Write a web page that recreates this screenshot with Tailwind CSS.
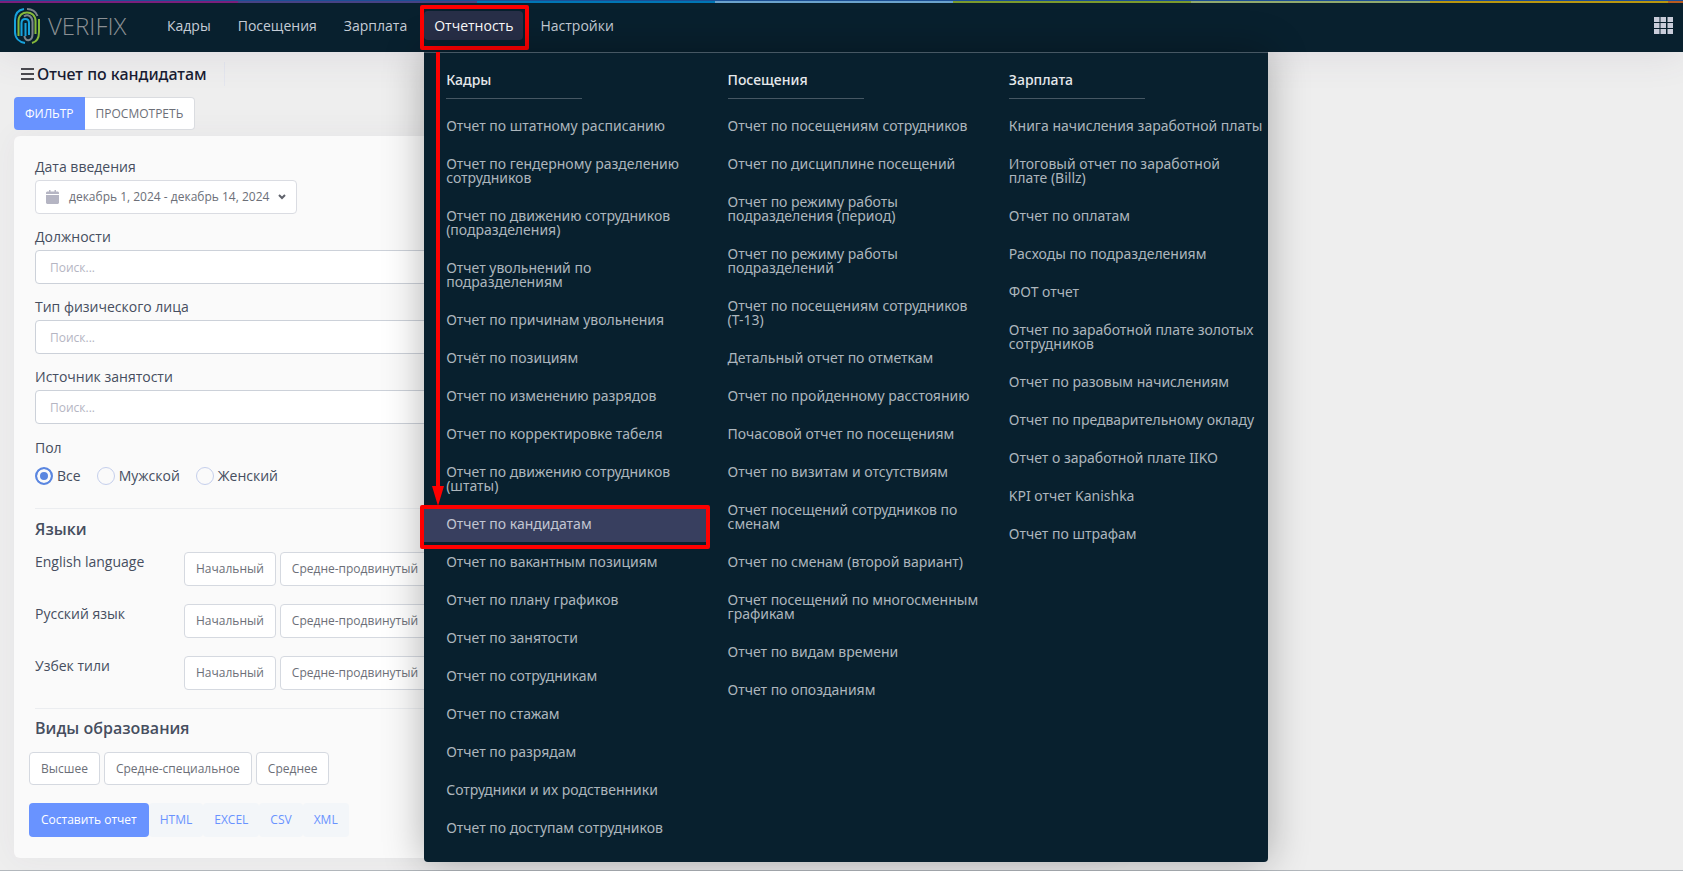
<!DOCTYPE html>
<html lang="ru">
  <head>
    <meta charset="UTF-8" />
    <meta name="viewport" content="width=device-width, initial-scale=1.0" />
    <title>Отчет по кандидатам</title>
    <script src="https://cdn.jsdelivr.net/npm/@tailwindcss/browser@4"></script>
  </head>
  <body class="min-h-screen flex flex-col bg-[#eeeeee] font-['Open_Sans','Noto_Sans',sans-serif] text-sm text-[#464e5f] overflow-x-hidden">
    <!-- Header -->
    <header class="relative z-10 h-[52px] flex flex-col bg-[#08202e] shadow-[0_0_40px_0_rgba(82,63,105,0.12)]">
      <div class="h-px bg-[#1c4f94]"></div>
      <div class="flex h-0.5">
        <span class="flex-1 bg-[#7a1f7c]"></span>
        <span class="flex-1 bg-[#464285]"></span>
        <span class="flex-1 bg-[#0076b5]"></span>
        <span class="flex-1 bg-[#6aa2cc]"></span>
        <span class="flex-1 bg-[#7a9a2d]"></span>
        <span class="flex-1 bg-[#8fa96f]"></span>
        <span class="flex-1 bg-[#b8960f]"></span>
        <span class="w-[15px] bg-[#b85c20]"></span>
      </div>

      <div class="flex flex-1 items-center pl-3.5 pr-2.5 pb-1">
        <a href="#" class="flex items-center w-[143px] gap-2">
          <svg class="w-[26px] h-9 shrink-0" viewBox="0 0 26 36" fill="none" stroke-width="2">
            <path d="M10 1C4 2 1 6 1 12v12c0 6 4 10 10 11" stroke="#17a2dc" />
            <path d="M13 1c5 0 9 3 10.500 7" stroke="#7e858b" />
            <path d="M4.500 28V13C4.500 1.500 21.500 1.500 21.500 13v13" stroke="#86b93b" />
            <path d="M25 11v13c0 6-3 10-7 11" stroke="#86b93b" />
            <path d="M10 8.500c4-3 8.500 0 8.500 5.500v12c0 8-8 8-8 2" stroke="#7e858b" />
            <path d="M7.500 28V15c0-5.500 7.500-5.500 7.500 0v12" stroke="#17a2dc" />
            <path d="M11.500 15v13" stroke="#17a2dc" />
          </svg>
          <span class="font-light text-2xl leading-8 text-[#8b9094]">VERIFIX</span>
        </a>
        <nav class="text-[#c5ccd6]">
          <ul class="flex items-center gap-[7px]">
            <li><a href="#" class="block px-2.5 leading-[29px]">Кадры</a></li>
            <li><a href="#" class="block px-2.5 leading-[29px]">Посещения</a></li>
            <li><a href="#" class="block px-2.5 leading-[29px]">Зарплата</a></li>
            <li class="relative">
              <a href="#" class="block px-2.5 leading-[29px] rounded bg-[#282f48] text-white">Отчетность</a>
              <span class="absolute -left-1 -right-1.5 -top-1.5 -bottom-2.5 border-4 border-[#fe0000] rounded-xs"></span>

              <!-- Reports menu -->
              <div class="absolute left-0 top-[41px] w-[844px] grid grid-cols-3 pt-4 pb-4 border-t border-[#465763] rounded-b bg-[#08202e] font-['Noto_Sans','Open_Sans',sans-serif] text-[#adb6bd] shadow-[0_0_40px_0_rgba(0,0,0,0.3)]">
                <section>
                  <h3 class="ml-[22px] mb-[9px] w-[136px] pb-2 border-b border-[#465763] font-medium leading-[21px] text-[#e6e9eb]">Кадры</h3>
                  <ul class="flex flex-col gap-0.5 leading-[14px]">
                    <li><a href="#" class="block py-[11px] pl-[22px] pr-2">Отчет по штатному расписанию</a></li>
                    <li><a href="#" class="block py-[11px] pl-[22px] pr-2">Отчет по гендерному разделению сотрудников</a></li>
                    <li><a href="#" class="block py-[11px] pl-[22px] pr-2">Отчет по движению сотрудников (подразделения)</a></li>
                    <li><a href="#" class="block py-[11px] pl-[22px] pr-2">Отчет увольнений по подразделениям</a></li>
                    <li><a href="#" class="block py-[11px] pl-[22px] pr-2">Отчет по причинам увольнения</a></li>
                    <li><a href="#" class="block py-[11px] pl-[22px] pr-2">Отчёт по позициям</a></li>
                    <li><a href="#" class="block py-[11px] pl-[22px] pr-2">Отчет по изменению разрядов</a></li>
                    <li><a href="#" class="block py-[11px] pl-[22px] pr-2">Отчет по корректировке табеля</a></li>
                    <li><a href="#" class="block py-[11px] pl-[22px] pr-2">Отчет по движению сотрудников (штаты)</a></li>
                    <li class="relative">
                      <a href="#" class="block py-[11px] pl-[22px] pr-2 bg-[#383f5f] text-[#c2c6d2]">Отчет по кандидатам</a>
                      <span class="absolute -inset-x-1 -top-px -bottom-[7px] border-4 border-[#fe0000] rounded-xs"></span>
                    </li>
                    <li><a href="#" class="block py-[11px] pl-[22px] pr-2">Отчет по вакантным позициям</a></li>
                    <li><a href="#" class="block py-[11px] pl-[22px] pr-2">Отчет по плану графиков</a></li>
                    <li><a href="#" class="block py-[11px] pl-[22px] pr-2">Отчет по занятости</a></li>
                    <li><a href="#" class="block py-[11px] pl-[22px] pr-2">Отчет по сотрудникам</a></li>
                    <li><a href="#" class="block py-[11px] pl-[22px] pr-2">Отчет по стажам</a></li>
                    <li><a href="#" class="block py-[11px] pl-[22px] pr-2">Отчет по разрядам</a></li>
                    <li><a href="#" class="block py-[11px] pl-[22px] pr-2">Сотрудники и их родственники</a></li>
                    <li><a href="#" class="block py-[11px] pl-[22px] pr-2">Отчет по доступам сотрудников</a></li>
                  </ul>
                </section>
                <section>
                  <h3 class="ml-[22px] mb-[9px] w-[136px] pb-2 border-b border-[#465763] font-medium leading-[21px] text-[#e6e9eb]">Посещения</h3>
                  <ul class="flex flex-col gap-0.5 leading-[14px]">
                    <li><a href="#" class="block py-[11px] pl-[22px] pr-2">Отчет по посещениям сотрудников</a></li>
                    <li><a href="#" class="block py-[11px] pl-[22px] pr-2">Отчет по дисциплине посещений</a></li>
                    <li><a href="#" class="block py-[11px] pl-[22px] pr-2">Отчет по режиму работы подразделения (период)</a></li>
                    <li><a href="#" class="block py-[11px] pl-[22px] pr-2">Отчет по режиму работы подразделений</a></li>
                    <li><a href="#" class="block py-[11px] pl-[22px] pr-2">Отчет по посещениям сотрудников (Т-13)</a></li>
                    <li><a href="#" class="block py-[11px] pl-[22px] pr-2">Детальный отчет по отметкам</a></li>
                    <li><a href="#" class="block py-[11px] pl-[22px] pr-2">Отчет по пройденному расстоянию</a></li>
                    <li><a href="#" class="block py-[11px] pl-[22px] pr-2">Почасовой отчет по посещениям</a></li>
                    <li><a href="#" class="block py-[11px] pl-[22px] pr-2">Отчет по визитам и отсутствиям</a></li>
                    <li><a href="#" class="block py-[11px] pl-[22px] pr-2">Отчет посещений сотрудников по сменам</a></li>
                    <li><a href="#" class="block py-[11px] pl-[22px] pr-2">Отчет по сменам (второй вариант)</a></li>
                    <li><a href="#" class="block py-[11px] pl-[22px] pr-2">Отчет посещений по многосменным графикам</a></li>
                    <li><a href="#" class="block py-[11px] pl-[22px] pr-2">Отчет по видам времени</a></li>
                    <li><a href="#" class="block py-[11px] pl-[22px] pr-2">Отчет по опозданиям</a></li>
                  </ul>
                </section>
                <section>
                  <h3 class="ml-[22px] mb-[9px] w-[136px] pb-2 border-b border-[#465763] font-medium leading-[21px] text-[#e6e9eb]">Зарплата</h3>
                  <ul class="flex flex-col gap-0.5 leading-[14px]">
                    <li><a href="#" class="block py-[11px] pl-[22px] whitespace-nowrap">Книга начисления заработной платы</a></li>
                    <li><a href="#" class="block py-[11px] pl-[22px] pr-5">Итоговый отчет по заработной плате (Billz)</a></li>
                    <li><a href="#" class="block py-[11px] pl-[22px] pr-2">Отчет по оплатам</a></li>
                    <li><a href="#" class="block py-[11px] pl-[22px] pr-2">Расходы по подразделениям</a></li>
                    <li><a href="#" class="block py-[11px] pl-[22px] pr-2">ФОТ отчет</a></li>
                    <li><a href="#" class="block py-[11px] pl-[22px] pr-2">Отчет по заработной плате золотых сотрудников</a></li>
                    <li><a href="#" class="block py-[11px] pl-[22px] pr-2">Отчет по разовым начислениям</a></li>
                    <li><a href="#" class="block py-[11px] pl-[22px] pr-2">Отчет по предварительному окладу</a></li>
                    <li><a href="#" class="block py-[11px] pl-[22px] pr-2">Отчет о заработной плате IIKO</a></li>
                    <li><a href="#" class="block py-[11px] pl-[22px] pr-2">KPI отчет Kanishka</a></li>
                    <li><a href="#" class="block py-[11px] pl-[22px] pr-2">Отчет по штрафам</a></li>
                  </ul>
                </section>
                <svg class="absolute left-2 -top-px w-3 h-[454px]" viewBox="0 0 12 454" fill="#fe0000">
                  <path d="M4 0h4v434h4l-6 20l-6-20h4z" />
                </svg>
              </div>
            </li>
            <li><a href="#" class="block px-2.5 leading-[29px]">Настройки</a></li>
          </ul>
        </nav>
        <button type="button" class="ml-auto" aria-label="Приложения">
          <svg class="w-[19px] h-[17px]" viewBox="0 0 19 17" fill="#c9cdda">
            <path d="M0 0h5.500v5H0zM6.500 0H12v5H6.500zM13.500 0H19v5h-5.500zM0 6h5.500v5H0zM6.500 6H12v5H6.500zM13.500 6H19v5h-5.500zM0 12h5.500v5H0zM6.500 12H12v5H6.500zM13.500 12H19v5h-5.500z" />
          </svg>
        </button>
      </div>
    </header>

    <!-- Page -->
    <main class="flex-1 px-3.5 pt-[9px] pb-3 border-b border-[#b3b8bd]">
      <div class="flex items-center gap-[3px] pl-[7px] h-[25px] text-[#181c32]">
        <svg class="w-[13px] h-3" viewBox="0 0 13 12" fill="#4a4a4f">
          <path d="M0 0h13v2H0zM0 5h13v2H0zM0 10h13v2H0z" />
        </svg>
        <h1 class="text-base font-medium font-['Noto_Sans','Open_Sans',sans-serif]">Отчет по кандидатам</h1>
        <span class="ml-3.5 w-px h-6 bg-[#e4e6ee]"></span>
      </div>

      <div class="flex mt-[11px] text-xs">
        <button type="button" class="h-[33px] px-[11px] rounded-l bg-[#6993ff] text-white">ФИЛЬТР</button>
        <button type="button" class="h-[33px] px-[11px] rounded-r border border-l-0 border-[#dadce0] bg-white text-[#6c6f78]">ПРОСМОТРЕТЬ</button>
      </div>

      <form class="mt-1.5 w-2/3 px-[21px] pt-5 pb-[21px] rounded-md bg-[#fafafa] shadow-[0_0_30px_0_rgba(82,63,105,0.05)]">
        <label for="period" class="block leading-[22px] pb-0.5">Дата введения</label>
        <button type="button" id="period" class="flex items-center h-[34px] w-[262px] pl-2.5 pr-2.5 rounded border border-[#dadce2] bg-white text-xs text-[#6c6f78]">
          <svg class="w-[13px] h-3.5 mr-2.5" viewBox="0 0 13 14" fill="#b5b5c3">
            <path d="M3 0h1.500v1.500h4V0H10v1.500h2L13 2.500V4H0V2.500L1 1.500h2zM0 5h13v8l-1 1H1l-1-1z" />
          </svg>
          <span class="whitespace-nowrap">декабрь 1, 2024 - декабрь 14, 2024</span>
          <svg class="w-2 h-1.5 ml-auto" viewBox="0 0 8 6" fill="none" stroke="#5f626b" stroke-width="2">
            <path d="M1 1l3 3l3-3" />
          </svg>
        </button>

        <label for="position" class="block mt-3 leading-[22px] pb-0.5">Должности</label>
        <input id="position" type="text" placeholder="Поиск..." class="block w-full h-[34px] px-3.5 rounded border border-[#ccd1d9] bg-white text-xs placeholder:text-[#b5b5c3]" />

        <label for="person" class="block mt-3 leading-[22px] pb-0.5">Тип физического лица</label>
        <input id="person" type="text" placeholder="Поиск..." class="block w-full h-[34px] px-3.5 rounded border border-[#ccd1d9] bg-white text-xs placeholder:text-[#b5b5c3]" />

        <label for="source" class="block mt-3 leading-[22px] pb-0.5">Источник занятости</label>
        <input id="source" type="text" placeholder="Поиск..." class="block w-full h-[34px] px-3.5 rounded border border-[#ccd1d9] bg-white text-xs placeholder:text-[#b5b5c3]" />

        <fieldset class="mt-3">
          <legend class="leading-6">Пол</legend>
          <div class="flex gap-4 mt-1">
            <label class="flex items-center gap-1 leading-6"><input type="radio" name="gender" checked class="appearance-none size-[18px] rounded-full border-2 border-[#5a86e0] bg-[#5a86e0] shadow-[inset_0_0_0_3px_#fafafa]" />Все</label>
            <label class="flex items-center gap-1 leading-6"><input type="radio" name="gender" class="appearance-none size-[18px] rounded-full border border-[#c5cfec]" />Мужской</label>
            <label class="flex items-center gap-1 leading-6"><input type="radio" name="gender" class="appearance-none size-[18px] rounded-full border border-[#c5cfec]" />Женский</label>
          </div>
        </fieldset>

        <hr class="mt-5 border-[#ebedf0]" />
        <h2 class="mt-2 text-base leading-6 font-semibold">Языки</h2>
        <div class="mt-[11px] flex flex-col gap-[18px]">
          <div class="flex gap-1">
            <span class="w-[145px] leading-[20px]">English language</span>
            <button type="button" class="h-[34px] px-[11px] rounded border border-[#d5d9e0] bg-white text-xs text-[#6c6f78]">Начальный</button>
            <button type="button" class="h-[34px] px-[11px] rounded border border-[#d5d9e0] bg-white text-xs text-[#6c6f78]">Средне-продвинутый</button>
          </div>
          <div class="flex gap-1">
            <span class="w-[145px] leading-[20px]">Русский язык</span>
            <button type="button" class="h-[34px] px-[11px] rounded border border-[#d5d9e0] bg-white text-xs text-[#6c6f78]">Начальный</button>
            <button type="button" class="h-[34px] px-[11px] rounded border border-[#d5d9e0] bg-white text-xs text-[#6c6f78]">Средне-продвинутый</button>
          </div>
          <div class="flex gap-1">
            <span class="w-[145px] leading-[20px]">Узбек тили</span>
            <button type="button" class="h-[34px] px-[11px] rounded border border-[#d5d9e0] bg-white text-xs text-[#6c6f78]">Начальный</button>
            <button type="button" class="h-[34px] px-[11px] rounded border border-[#d5d9e0] bg-white text-xs text-[#6c6f78]">Средне-продвинутый</button>
          </div>
        </div>

        <hr class="mt-[18px] border-[#ebedf0]" />
        <h2 class="mt-[7px] text-base leading-6 font-semibold">Виды образования</h2>
        <div class="-ml-1.5 mt-3 flex gap-1 text-xs text-[#6c6f78]">
          <button type="button" class="h-[33px] px-[11px] rounded border border-[#d5d9e0] bg-white">Высшее</button>
          <button type="button" class="h-[33px] px-[11px] rounded border border-[#d5d9e0] bg-white">Средне-специальное</button>
          <button type="button" class="h-[33px] px-[11px] rounded border border-[#d5d9e0] bg-white">Среднее</button>
        </div>

        <div class="-ml-1.5 mt-[18px] flex text-xs text-[#6993ff]">
          <button type="submit" class="h-[34px] px-3 rounded bg-[#6993ff] text-white">Составить отчет</button>
          <button type="button" class="h-[34px] px-[11px] rounded bg-[#f3f6f9]">HTML</button>
          <button type="button" class="h-[34px] px-[11px] rounded bg-[#f3f6f9]">EXCEL</button>
          <button type="button" class="h-[34px] px-[11px] rounded bg-[#f3f6f9]">CSV</button>
          <button type="button" class="h-[34px] px-[11px] rounded bg-[#f3f6f9]">XML</button>
        </div>
      </form>
    </main>
  </body>
</html>
